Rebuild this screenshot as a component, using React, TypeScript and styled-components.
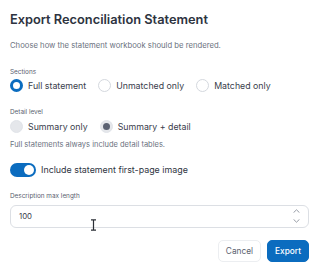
import React, { useState } from 'react';
import styled, { createGlobalStyle } from 'styled-components';

const GlobalStyle = createGlobalStyle`
  html, body {
    margin: 0;
    padding: 0;
    background: #ffffff;
  }
  body {
    font-family: Inter, "Noto Sans", "Liberation Sans", sans-serif;
    -webkit-font-smoothing: antialiased;
  }
  * {
    box-sizing: border-box;
  }
`;

const Dialog = styled.div`
  width: 320px;
  height: 271px;
  background: #ffffff;
  padding: 11px 11px 0 10px;
  display: flex;
  flex-direction: column;
  overflow: hidden;
`;

const Title = styled.h2`
  margin: 0;
  font-size: 12.8px;
  font-weight: 600;
  color: #2d3340;
  line-height: 17px;
`;

const Description = styled.p`
  margin: 12px 0 0;
  font-size: 7.7px;
  color: #6b7280;
  line-height: 11px;
`;

const FieldLabel = styled.div<{ $top: number }>`
  margin-top: ${({ $top }) => $top}px;
  font-size: 6.4px;
  color: #5b6270;
  line-height: 9px;
`;

const RadioRow = styled.div<{ $top: number }>`
  display: flex;
  align-items: center;
  gap: 12px;
  margin-top: ${({ $top }) => $top}px;
`;

const RadioOption = styled.label`
  display: flex;
  align-items: center;
  gap: 5px;
  font-size: 8.8px;
  color: #3a404c;
  line-height: 13px;
  cursor: pointer;
`;

type RadioKind = 'checked' | 'idle' | 'muted' | 'mutedChecked';

const RadioCircle = styled.span<{ $kind: RadioKind }>`
  width: 13px;
  height: 13px;
  border-radius: 50%;
  flex-shrink: 0;
  position: relative;
  border: ${({ $kind }) =>
    $kind === 'checked'
      ? '3px solid #0b6cbf'
      : $kind === 'idle'
      ? '1px solid #d4d8de'
      : '1px solid #e1e4e9'};
  background: ${({ $kind }) =>
    $kind === 'muted' || $kind === 'mutedChecked' ? '#e5e7eb' : '#ffffff'};

  &::after {
    content: '';
    display: ${({ $kind }) => ($kind === 'mutedChecked' ? 'block' : 'none')};
    position: absolute;
    left: 50%;
    top: 50%;
    width: 7px;
    height: 7px;
    margin: -3.5px 0 0 -3.5px;
    border-radius: 50%;
    background: #5b6272;
  }
`;

const Hint = styled.div`
  margin-top: 7.5px;
  font-size: 7.5px;
  color: #6b7280;
  line-height: 10px;
`;

const ToggleRow = styled.label`
  display: flex;
  align-items: center;
  gap: 5px;
  margin-top: 12.5px;
  font-size: 8.9px;
  color: #2f3542;
  line-height: 14px;
`;

const Track = styled.span<{ $on: boolean }>`
  width: 26px;
  height: 14px;
  border-radius: 7px;
  background: ${({ $on }) => ($on ? '#0b6cbf' : '#d1d5db')};
  display: flex;
  align-items: center;
  justify-content: ${({ $on }) => ($on ? 'flex-end' : 'flex-start')};
  padding: 0 2px;
  flex-shrink: 0;
`;

const Knob = styled.span`
  width: 10px;
  height: 10px;
  border-radius: 50%;
  background: #ffffff;
`;

const InputBox = styled.div`
  margin-top: 4px;
  height: 23px;
  border: 1px solid #dcdfe4;
  border-radius: 6px;
  display: flex;
  align-items: center;
  padding: 0 8px 0 8px;
  position: relative;
`;

const NumberText = styled.span`
  flex: 1;
  font-size: 7.8px;
  color: #3a404c;
`;

const Spinner = styled.div`
  display: flex;
  flex-direction: column;
  gap: 6px;
  color: #8a909b;
`;

const Cursor = styled.svg`
  position: absolute;
  left: 79px;
  top: 13px;
`;

const Footer = styled.div`
  display: flex;
  justify-content: flex-end;
  gap: 6px;
  margin-top: 12px;
`;

const Button = styled.button<{ $primary?: boolean }>`
  height: 22px;
  padding: 0 7px;
  border-radius: 5px;
  font-family: inherit;
  font-size: 8.3px;
  font-weight: ${({ $primary }) => ($primary ? 500 : 400)};
  border: 1px solid ${({ $primary }) => ($primary ? '#0b6cbf' : '#eceef1')};
  background: ${({ $primary }) => ($primary ? '#0b6cbf' : '#ffffff')};
  color: ${({ $primary }) => ($primary ? '#ffffff' : '#5b6270')};
`;

const Chevron: React.FC<{ up?: boolean }> = ({ up }) => (
  <svg width="7" height="4" viewBox="0 0 7 4" fill="none">
    <path
      d={up ? 'M0.8 3.4 L3.5 0.8 L6.2 3.4' : 'M0.8 0.6 L3.5 3.2 L6.2 0.6'}
      stroke="currentColor"
      strokeWidth="0.9"
      strokeLinecap="round"
      strokeLinejoin="round"
    />
  </svg>
);

const App: React.FC = () => {
  const [section, setSection] = useState('full');
  const [detail, setDetail] = useState('detail');
  const [includeImage, setIncludeImage] = useState(true);

  return (
    <>
      <GlobalStyle />
      <Dialog>
        <Title>Export Reconciliation Statement</Title>
        <Description>Choose how the statement workbook should be rendered.</Description>

        <FieldLabel $top={16.5}>Sections</FieldLabel>
        <RadioRow $top={2}>
          <RadioOption onClick={() => setSection('full')}>
            <RadioCircle $kind={section === 'full' ? 'checked' : 'idle'} />
            Full statement
          </RadioOption>
          <RadioOption onClick={() => setSection('unmatched')}>
            <RadioCircle $kind={section === 'unmatched' ? 'checked' : 'idle'} />
            Unmatched only
          </RadioOption>
          <RadioOption onClick={() => setSection('matched')}>
            <RadioCircle $kind={section === 'matched' ? 'checked' : 'idle'} />
            Matched only
          </RadioOption>
        </RadioRow>

        <FieldLabel $top={16}>Detail level</FieldLabel>
        <RadioRow $top={3}>
          <RadioOption onClick={() => setDetail('summary')}>
            <RadioCircle $kind={detail === 'summary' ? 'mutedChecked' : 'muted'} />
            Summary only
          </RadioOption>
          <RadioOption onClick={() => setDetail('detail')}>
            <RadioCircle $kind={detail === 'detail' ? 'mutedChecked' : 'muted'} />
            Summary + detail
          </RadioOption>
        </RadioRow>
        <Hint>Full statements always include detail tables.</Hint>

        <ToggleRow onClick={() => setIncludeImage(v => !v)}>
          <Track $on={includeImage}>
            <Knob />
          </Track>
          Include statement first-page image
        </ToggleRow>

        <FieldLabel $top={15}>Description max length</FieldLabel>
        <InputBox>
          <NumberText>100</NumberText>
          <Spinner>
            <Chevron up />
            <Chevron />
          </Spinner>
          <Cursor width="7" height="12" viewBox="0 0 7 12">
            <path
              d="M1 0.8 H6 M3.5 0.8 V11.2 M1 11.2 H6"
              stroke="#2b2f36"
              strokeWidth="1.2"
              fill="none"
            />
          </Cursor>
        </InputBox>

        <Footer>
          <Button>Cancel</Button>
          <Button $primary>Export</Button>
        </Footer>
      </Dialog>
    </>
  );
};

export default App;
